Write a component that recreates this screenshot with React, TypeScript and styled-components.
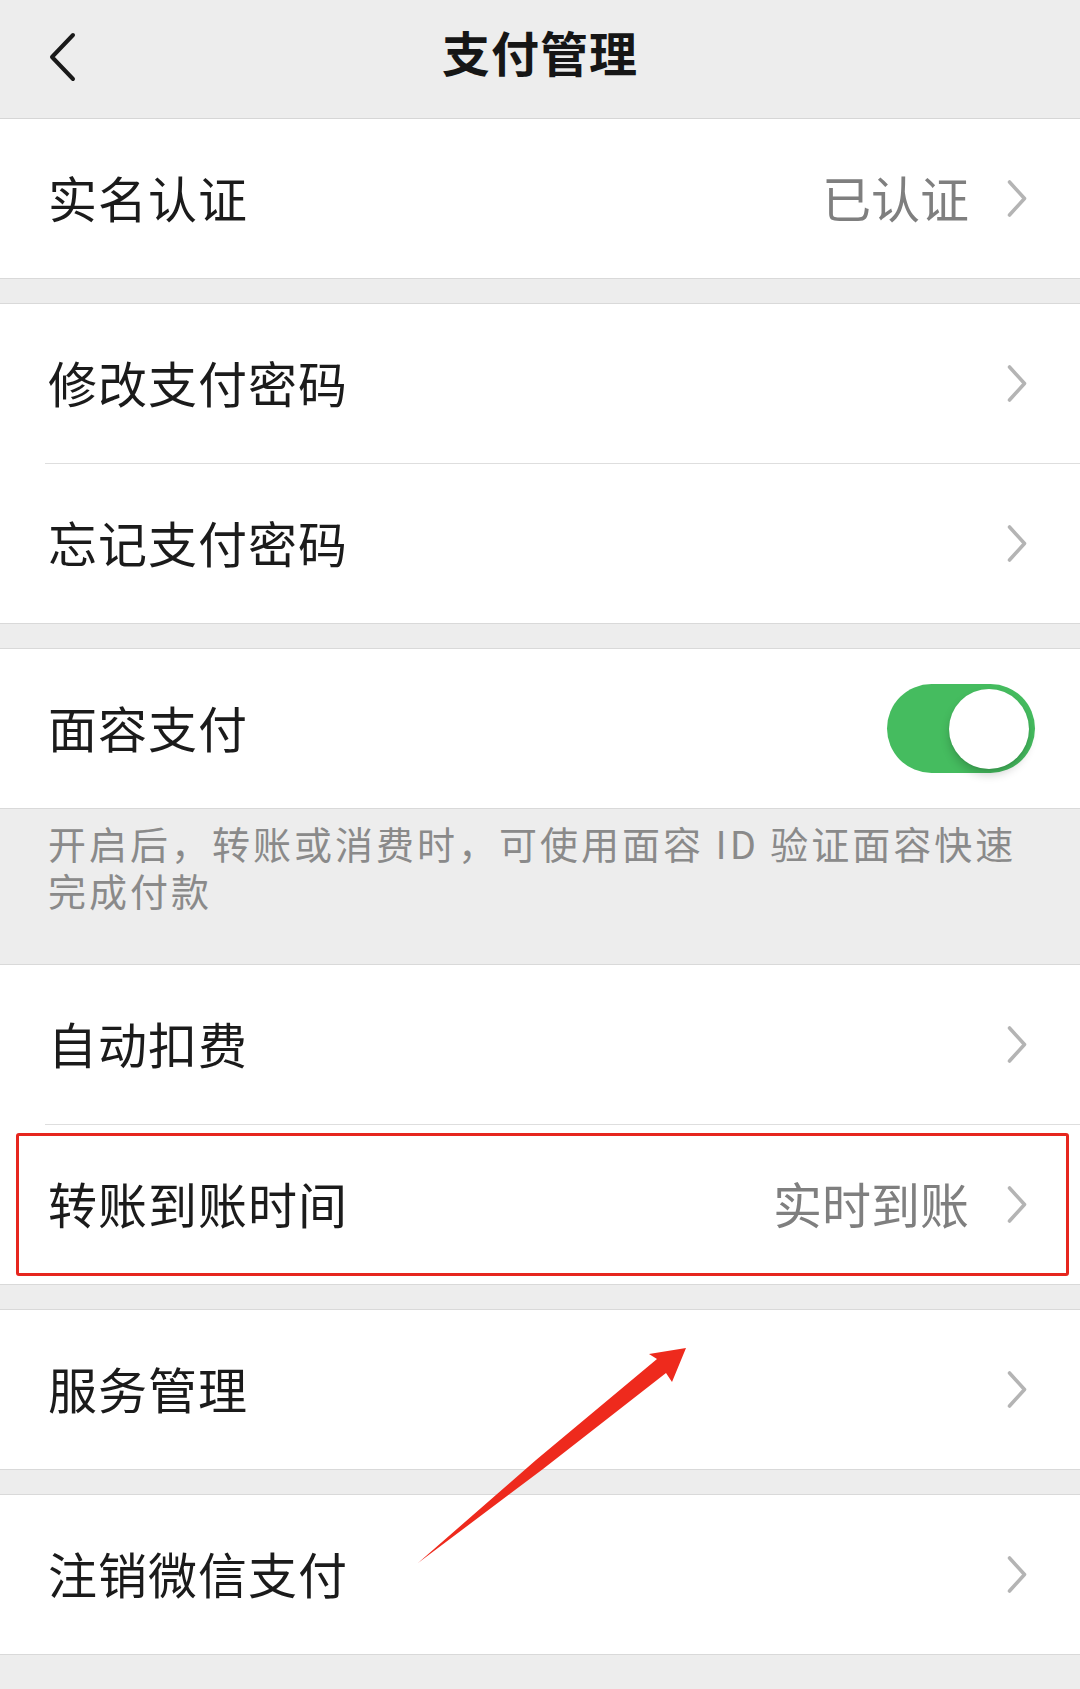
import React from "react";
import styled, { createGlobalStyle } from "styled-components";

const GlobalStyle = createGlobalStyle`
  html, body {
    margin: 0;
    padding: 0;
    background: #ededed;
  }
  body {
    font-family: "Noto Sans CJK SC", "Noto Sans", sans-serif;
  }
`;

const Page = styled.div`
  position: relative;
  width: 1080px;
  min-height: 1689px;
  background: #ededed;
  overflow: hidden;
`;

const NavBar = styled.header`
  display: grid;
  grid-template-columns: 1fr auto 1fr;
  align-items: center;
  height: 118px;
  background: #ededed;
  border-bottom: 1px solid #d6d6d6;
`;

const BackButton = styled.div`
  display: flex;
  align-items: center;
  padding-left: 49px;
  padding-bottom: 4px;
`;

const Title = styled.h1`
  margin: 0;
  font-size: 48px;
  line-height: 1;
  font-weight: 700;
  letter-spacing: 1px;
  color: #161616;
  padding-bottom: 16px;
`;

const Group = styled.section<{ $first?: boolean; $gap?: boolean }>`
  background: #ffffff;
  border-top: ${(p) => (p.$first ? "none" : "1px solid #d9d9d9")};
  border-bottom: 1px solid #d9d9d9;
  margin-top: ${(p) => (p.$gap ? "24px" : "0")};
`;

const Row = styled.div<{ $divider?: boolean }>`
  position: relative;
  display: flex;
  align-items: center;
  height: 159px;
  padding: 0 53px 4px 48px;
  box-sizing: border-box;
  &::after {
    content: "";
    display: ${(p) => (p.$divider ? "block" : "none")};
    position: absolute;
    left: 45px;
    right: 0;
    bottom: -1px;
    height: 1px;
    background: #dedede;
  }
  & + & {
    margin-top: 1px;
  }
`;

const Label = styled.span`
  flex: 1;
  font-size: 49px;
  line-height: 1;
  letter-spacing: 1px;
  color: #1b1b1b;
  white-space: nowrap;
`;

const Value = styled.span`
  font-size: 49px;
  line-height: 1;
  color: #7f7f7f;
  margin-right: 38px;
  white-space: nowrap;
`;

const ChevronBox = styled.span`
  display: flex;
  align-items: center;
  width: 20px;
  height: 37px;
  margin-top: 4px;
`;

const Toggle = styled.div<{ $on?: boolean }>`
  position: relative;
  width: 148px;
  height: 89px;
  border-radius: 45px;
  background: ${(p) => (p.$on ? "#45bc5f" : "#e5e5e5")};
  margin-right: -8px;
  margin-top: 4px;
`;

const Knob = styled.div<{ $on?: boolean }>`
  position: absolute;
  top: 5px;
  left: ${(p) => (p.$on ? "62px" : "5px")};
  width: 80px;
  height: 80px;
  border-radius: 50%;
  background: #ffffff;
  box-shadow: 0 6px 10px rgba(0, 0, 0, 0.18), 0 1px 2px rgba(0, 0, 0, 0.08);
`;

const Footnote = styled.p`
  margin: 0;
  height: 155px;
  box-sizing: border-box;
  padding: 10px 40px 0 48px;
  font-size: 38px;
  line-height: 47px;
  letter-spacing: 3px;
  color: #8a8a8a;
`;

const Highlight = styled.div`
  position: absolute;
  left: 16px;
  right: 11px;
  top: 8px;
  bottom: 8px;
  border: 3px solid #e6261e;
  border-radius: 3px;
  pointer-events: none;
`;

const Overlay = styled.svg`
  position: absolute;
  left: 0;
  top: 0;
  width: 1080px;
  height: 1689px;
  pointer-events: none;
`;

const Chevron = () => (
  <ChevronBox>
    <svg width="20" height="37" viewBox="0 0 20 37">
      <polyline
        points="2.5,2 17.5,18.5 2.5,35"
        fill="none"
        stroke="#b4b4b4"
        strokeWidth="3.6"
        strokeLinecap="round"
        strokeLinejoin="round"
      />
    </svg>
  </ChevronBox>
);

const BackIcon = () => (
  <svg width="27" height="50" viewBox="0 0 27 50">
    <polyline
      points="24,3 3,25 24,47"
      fill="none"
      stroke="#1a1a1a"
      strokeWidth="4"
      strokeLinecap="round"
      strokeLinejoin="round"
    />
  </svg>
);

export default function App() {
  return (
    <Page>
      <GlobalStyle />
      <NavBar>
        <BackButton>
          <BackIcon />
        </BackButton>
        <Title>支付管理</Title>
        <div />
      </NavBar>

      <Group $first>
        <Row>
          <Label>实名认证</Label>
          <Value>已认证</Value>
          <Chevron />
        </Row>
      </Group>

      <Group $gap>
        <Row $divider>
          <Label>修改支付密码</Label>
          <Chevron />
        </Row>
        <Row>
          <Label>忘记支付密码</Label>
          <Chevron />
        </Row>
      </Group>

      <Group $gap>
        <Row>
          <Label>面容支付</Label>
          <Toggle $on>
            <Knob $on />
          </Toggle>
        </Row>
      </Group>

      <Footnote>
        开启后，转账或消费时，可使用面容 ID 验证面容快速
        <br />
        完成付款
      </Footnote>

      <Group>
        <Row $divider>
          <Label>自动扣费</Label>
          <Chevron />
        </Row>
        <Row>
          <Label>转账到账时间</Label>
          <Value>实时到账</Value>
          <Chevron />
          <Highlight />
        </Row>
      </Group>

      <Group $gap>
        <Row>
          <Label>服务管理</Label>
          <Chevron />
        </Row>
      </Group>

      <Group $gap>
        <Row>
          <Label>注销微信支付</Label>
          <Chevron />
        </Row>
      </Group>

      <Overlay viewBox="0 0 1080 1689">
        <path
          d="M418,1563 L536,1460 L657,1359 L649,1354 L686,1348 L672,1382 L666,1373 L543,1469 Z"
          fill="#ee2a1d"
        />
      </Overlay>
    </Page>
  );
}
